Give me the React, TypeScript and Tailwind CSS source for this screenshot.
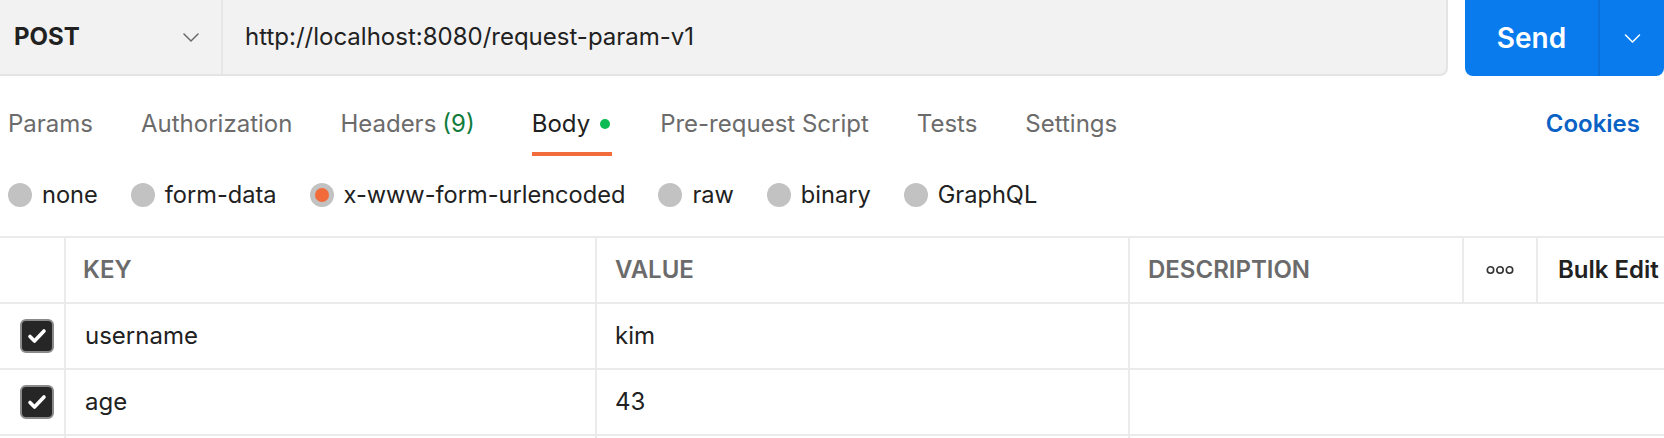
import { useState } from 'react';

function Chevron({ className }: { className?: string }) {
  return (
    <svg width="16" height="9" viewBox="0 0 16 9" fill="none" stroke="currentColor" strokeWidth="1.5" strokeLinecap="round" strokeLinejoin="round" className={className}>
      <path d="M1 1l7 7 7-7" />
    </svg>
  );
}

function CheckBox() {
  return (
    <div className="flex h-[34px] w-[34px] items-center justify-center rounded-[6px] border-2 border-[#8a8a8a] bg-[#262626]">
      <svg width="24" height="24" viewBox="0 0 24 24" fill="none" stroke="white" strokeWidth="3.6" strokeLinecap="round" strokeLinejoin="round">
        <path d="M5 12.5l4.5 4.5L19 7" />
      </svg>
    </div>
  );
}

function MoreIcon() {
  return (
    <svg width="28" height="10" viewBox="0 0 28 10" fill="none" stroke="#333333" strokeWidth="1.6">
      <circle cx="4.5" cy="5" r="3.2" />
      <circle cx="14" cy="5" r="3.2" />
      <circle cx="23.5" cy="5" r="3.2" />
    </svg>
  );
}

const tabs = ['Params', 'Authorization', 'Headers', 'Body', 'Pre-request Script', 'Tests', 'Settings'];
const bodyTypes = ['none', 'form-data', 'x-www-form-urlencoded', 'raw', 'binary', 'GraphQL'];
const rows = [
  { key: 'username', value: 'kim' },
  { key: 'age', value: '43' },
];

export default function App() {
  const [active, setActive] = useState('Body');
  const [bodyType, setBodyType] = useState('x-www-form-urlencoded');

  return (
    <div className="h-[438px] w-[1664px] overflow-hidden bg-white text-[#212121]" style={{ fontFamily: 'Inter, "Noto Sans", sans-serif' }}>
      {/* request bar */}
      <div className="flex h-[76px]">
        <div className="flex flex-1 rounded-br-[8px] border-b-2 border-r-2 border-[#e4e4e4] bg-[#f2f2f2]">
          <div className="flex w-[223px] items-center border-r-2 border-[#e6e6e6] pl-[14px] pr-[22px]">
            <span className="text-[24px] font-bold">POST</span>
            <Chevron className="ml-auto text-[#6b6b6b]" />
          </div>
          <div className="flex items-center pl-[22px] text-[24px]">http://localhost:8080/request-param-v1</div>
        </div>
        <div className="ml-[17px] flex w-[199px] rounded-b-[8px] bg-[#097bed] text-white">
          <div className="flex w-[135px] items-center justify-center border-r-2 border-[#0a6ed6] text-[28px] font-semibold">Send</div>
          <div className="flex flex-1 items-center justify-center">
            <Chevron className="w-[17px]" />
          </div>
        </div>
      </div>

      {/* tabs */}
      <div className="flex h-[80px] gap-[48px] px-[8px] text-[24px]">
        {tabs.map((t) => (
          <button
            key={t}
            onClick={() => setActive(t)}
            className={
              'flex items-center border-b-4 pt-[20px] ' +
              (active === t ? 'border-[#f26b3a] text-[#212121] ' : 'border-transparent text-[#6b6b6b] ') +
              (t === 'Headers' ? 'mr-[9px]' : '')
            }
          >
            {t}
            {t === 'Headers' && <span className="ml-[6px] text-[#0f7b3c]">(9)</span>}
            {t === 'Body' && <span className="ml-[10px] mr-[2px] h-[10px] w-[10px] rounded-full bg-[#0cbb52]" />}
          </button>
        ))}
        <div className="ml-auto flex items-center pb-[4px] pr-[16px] pt-[20px] text-[24px] font-semibold text-[#0b62c5]">Cookies</div>
      </div>

      {/* body types */}
      <div className="flex h-[80px] items-center gap-[33px] px-[8px] pb-[2px] text-[23.6px]">
        {bodyTypes.map((b) => (
          <button key={b} onClick={() => setBodyType(b)} className="flex items-center gap-[10px]">
            <span className="flex h-[24px] w-[24px] items-center justify-center rounded-full bg-[#c2c2c2]">
              {bodyType === b && <span className="h-[14px] w-[14px] rounded-full bg-[#f26b3a]" />}
            </span>
            {b}
          </button>
        ))}
      </div>

      {/* table */}
      <div className="border-t-2 border-[#ebebeb] text-[24px]">
        <div className="flex h-[66px] border-b-2 border-[#ebebeb] font-semibold text-[#6b6b6b]">
          <div className="w-[66px] border-r-2 border-[#ebebeb]" />
          <div className="flex w-[531px] items-center border-r-2 border-[#ebebeb] pl-[17px]">KEY</div>
          <div className="flex w-[533px] items-center border-r-2 border-[#ebebeb] pl-[18px]">VALUE</div>
          <div className="flex w-[334px] items-center border-r-2 border-[#ebebeb] pl-[18px]">DESCRIPTION</div>
          <div className="flex w-[74px] items-center justify-center border-r-2 border-[#ebebeb]">
            <MoreIcon />
          </div>
          <div className="flex flex-1 items-center pl-[20px] text-[#212121]">Bulk Edit</div>
        </div>
        {rows.map((r) => (
          <div key={r.key} className="flex h-[66px] border-b-2 border-[#ebebeb]">
            <div className="flex w-[66px] items-center border-r-2 border-[#ebebeb] pl-[20px]">
              <CheckBox />
            </div>
            <div className="flex w-[531px] items-center border-r-2 border-[#ebebeb] pl-[19px]">{r.key}</div>
            <div className="flex w-[533px] items-center border-r-2 border-[#ebebeb] pl-[18px]">{r.value}</div>
            <div className="flex-1" />
          </div>
        ))}
        <div className="flex h-[66px]">
          <div className="w-[66px] border-r-2 border-[#ebebeb]" />
          <div className="w-[531px] border-r-2 border-[#ebebeb]" />
          <div className="w-[533px] border-r-2 border-[#ebebeb]" />
        </div>
      </div>
    </div>
  );
}
